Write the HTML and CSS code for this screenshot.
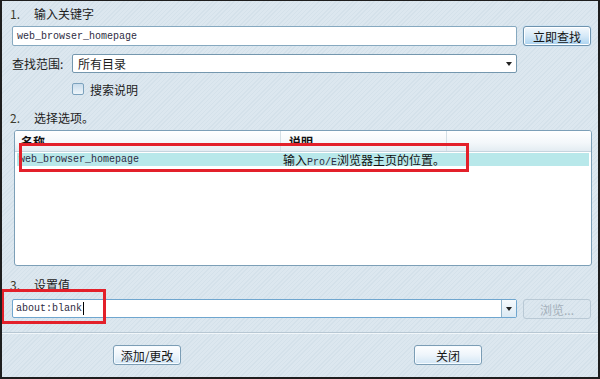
FILE: index.html
```html
<!DOCTYPE html>
<html>
<head>
    <title>选项</title>
    <link rel="stylesheet" href="styles.css">
</head>
<body>
    <div class="dialog">
        <div class="step"><span class="num">1.</span>输入关键字</div>
        <div class="row">
            <div class="field mono">web_browser_homepage</div>
            <button class="btn btn-default">立即查找</button>
        </div>

        <div class="row scope">
            <span class="scope-label">查找范围:</span>
            <div class="field select">所有目录<span class="arrow"></span></div>
        </div>

        <div class="check-row">
            <span class="checkbox"></span>
            <span>搜索说明</span>
        </div>

        <div class="step step-2"><span class="num">2.</span>选择选项。</div>
        <div class="list">
            <div class="list-head">
                <div class="col col-name"><span>名称</span></div>
                <div class="col col-desc"><span>说明</span></div>
                <div class="col col-rest"></div>
            </div>
            <div class="list-body">
                <div class="list-row selected">
                    <div class="cell col-name mono">web_browser_homepage</div>
                    <div class="cell col-desc">输入<span class="mono">Pro/E</span>浏览器主页的位置。</div>
                </div>
            </div>
        </div>

        <!-- Value -->
        <div class="step step-3"><span class="num">3.</span>设置值</div>
        <div class="row value-row">
            <div class="field combo">
                <span class="combo-text mono">about:blank<span class="caret"></span></span>
                <span class="combo-btn"><span class="arrow"></span></span>
            </div>
            <button class="btn btn-disabled">浏览...</button>
        </div>

        <div class="separator"></div>

        <div class="actions">
            <button class="btn">添加/更改</button>
            <button class="btn">关闭</button>
        </div>

        <!-- red annotation boxes -->
        <div class="mark mark-list"></div>
        <div class="mark mark-value"></div>
    </div>
</body>
</html>
```

FILE: styles.css
```css
body {
    margin: 0;
    padding: 0;
    font-family: "Noto Sans CJK SC", "Liberation Sans", sans-serif;
    font-size: 12px;
    color: #1c1c1c;
}

.dialog {
    position: relative;
    box-sizing: border-box;
    width: 600px;
    height: 379px;
    padding: 0 7px 0 10px;
    border: 2px solid #1e1e1e;
    border-top-width: 1px;
    background: repeating-linear-gradient(135deg, #dce7ef 0, #dce7ef 2px, #d4e1ea 2px, #d4e1ea 3px);
    overflow: hidden;
}

.mono {
    font-family: "Liberation Mono", monospace;
    font-size: 10px;
    color: #2e2c42;
}

.step {
    height: 16px;
    line-height: 16px;
    margin: 5px 0 0 -2px;
}

.step .num {
    display: inline-block;
    width: 24px;
    color: #3c3c2c;
}

.step-2 {
    margin-top: 14px;
}

.step-3 {
    margin-top: 11px;
}

.row {
    display: flex;
    gap: 6px;
    height: 20px;
    margin-top: 4px;
}

.field {
    flex: 1;
    box-sizing: border-box;
    height: 100%;
    display: flex;
    align-items: center;
    padding-left: 4px;
    background: #fff;
    border: 1px solid #86a9c0;
    border-radius: 2px;
}

.btn {
    box-sizing: border-box;
    width: 68px;
    height: 20px;
    padding: 0;
    font-family: "Noto Sans CJK SC", sans-serif;
    font-size: 12px;
    color: #141414;
    border: 1px solid #7b9db5;
    border-radius: 3px;
    background: linear-gradient(#fdfeff, #eef5fb 50%, #d2e6f5);
    box-shadow: inset 0 0 0 1px #f6fbff;
}

.btn-default {
    border-color: #6e93ae;
    background: linear-gradient(#f4f9fd, #d6e9f7 50%, #a9d2f0);
    box-shadow: inset 0 0 0 1px #ffffff, 0 0 0 1px #cfe3f1;
}

.btn-disabled {
    color: #a4b0ba;
    border-color: #b9c9d5;
    background: transparent;
    box-shadow: none;
}

.scope {
    margin-top: 8px;
    height: 19px;
    padding-right: 74px;
    gap: 0;
}

.scope-label {
    width: 60px;
    line-height: 19px;
}

.select {
    position: relative;
    padding-left: 5px;
    border-color: #7497ae;
}

.arrow {
    width: 0;
    height: 0;
    border-left: 3px solid transparent;
    border-right: 3px solid transparent;
    border-top: 4px solid #222;
}

.select .arrow {
    margin-left: auto;
    margin-right: 4px;
}

.check-row {
    display: flex;
    align-items: center;
    gap: 6px;
    height: 14px;
    margin-top: 9px;
    padding-left: 60px;
}

.checkbox {
    box-sizing: border-box;
    width: 12px;
    height: 12px;
    border: 1px solid #7ca2bd;
    border-radius: 2px;
    background: linear-gradient(#c9dcec, #eef5fa);
}

.list {
    box-sizing: border-box;
    height: 136px;
    margin: 4px -1px 0 2px;
    background: #fff;
    border: 1px solid #7c9fb7;
    border-radius: 3px;
    overflow: hidden;
}

.list-head {
    display: flex;
    height: 20px;
    border-bottom: 1px solid #c5d4de;
    background: linear-gradient(#ffffff, #f3f7fa 60%, #e3ecf2);
}

.col-name {
    width: 266px;
}

.col-desc {
    width: 166px;
}

.list-head .col {
    box-sizing: border-box;
    height: 100%;
    border-right: 1px solid #d4dfe6;
}

.list-head .col span {
    display: block;
    height: 11px;
    overflow: hidden;
    margin: 3px 0 0 6px;
    line-height: 16px;
    font-weight: bold;
    color: #111;
}

.list-head .col-desc span {
    margin-left: 8px;
}

.list-head .col-rest {
    flex: 1;
    border-right: none;
}

.list-body {
    padding: 0 2px;
}

.list-row {
    display: flex;
    height: 13px;
    align-items: center;
    margin-top: 1px;
}

.selected {
    background: #b8e8ea;
}

.cell {
    white-space: nowrap;
    overflow: hidden;
}

.list-row .col-name {
    width: 264px;
    padding-left: 2px;
    box-sizing: border-box;
}

.list-row .col-desc {
    width: 200px;
    padding-left: 2px;
    color: #111;
}

.value-row {
    margin-top: 6px;
    height: 19px;
}

.combo {
    padding-left: 3px;
    padding-right: 0;
    border-color: #6fa6cf;
}

.combo-text {
    flex: 1;
    display: flex;
    align-items: center;
}

.caret {
    display: inline-block;
    width: 1px;
    height: 13px;
    margin-left: 1px;
    background: #000;
}

.combo-btn {
    box-sizing: border-box;
    width: 15px;
    height: 100%;
    display: flex;
    align-items: center;
    justify-content: center;
    border-left: 1px solid #8fb2c9;
    background: linear-gradient(#f6fafd, #dbe9f3);
}

.separator {
    height: 0;
    margin: 14px -7px 0 -10px;
    border-top: 1px solid #b7c7d3;
    border-bottom: 1px solid #f2f7fa;
}

.actions {
    display: flex;
    gap: 233px;
    margin-top: 11px;
    padding-left: 101px;
}

.mark {
    position: absolute;
    box-sizing: border-box;
    border: 3px solid #e3202a;
}

.mark-list {
    left: 17px;
    top: 142px;
    width: 450px;
    height: 29px;
}

.mark-value {
    left: -1px;
    top: 288px;
    width: 105px;
    height: 35px;
}
```
